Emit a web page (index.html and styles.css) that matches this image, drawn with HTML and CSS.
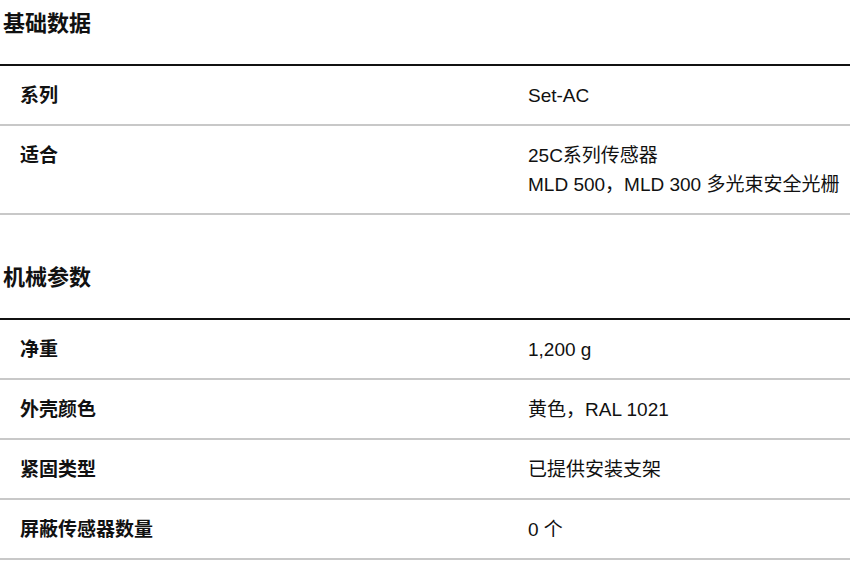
FILE: index.html
```html
<!DOCTYPE html>
<html lang="zh-CN">
<head>
<meta charset="utf-8">
<title>技术数据</title>
<link rel="stylesheet" href="styles.css">
</head>
<body>
<section class="section">
  <h2 class="section-title">基础数据</h2>
  <div class="table">
    <div class="row"><div class="label">系列</div><div class="value">Set-AC</div></div>
    <div class="row"><div class="label">适合</div><div class="value">25C系列传感器<br>MLD 500，MLD 300 多光束安全光栅</div></div>
  </div>
</section>
<section class="section">
  <h2 class="section-title">机械参数</h2>
  <div class="table">
    <div class="row"><div class="label">净重</div><div class="value">1,200 g</div></div>
    <div class="row"><div class="label">外壳颜色</div><div class="value">黄色，RAL 1021</div></div>
    <div class="row"><div class="label">紧固类型</div><div class="value">已提供安装支架</div></div>
    <div class="row"><div class="label">屏蔽传感器数量</div><div class="value">0 个</div></div>
  </div>
</section>
</body>
</html>
```
FILE: styles.css
```css
html, body {
  margin: 0;
  padding: 0;
  background: #fff;
}
body {
  padding-top: 9px;
  font-family: "Liberation Sans", "Noto Sans CJK SC", sans-serif;
  color: #111;
  font-size: 19px;
}
.section + .section {
  margin-top: 48px;
}
.section-title {
  margin: 0 0 25px;
  padding-left: 3px;
  font-size: 22px;
  line-height: 30px;
  font-weight: bold;
}
.table {
  border-top: 2px solid #111;
}
.row {
  display: grid;
  grid-template-columns: 508px 1fr;
  border-bottom: 2px solid #c8c8c8;
}
.label, .value {
  padding: 14.5px 20px;
  line-height: 29px;
}
.value {
  padding-right: 0;
  white-space: nowrap;
}
.label {
  font-weight: bold;
}
```
